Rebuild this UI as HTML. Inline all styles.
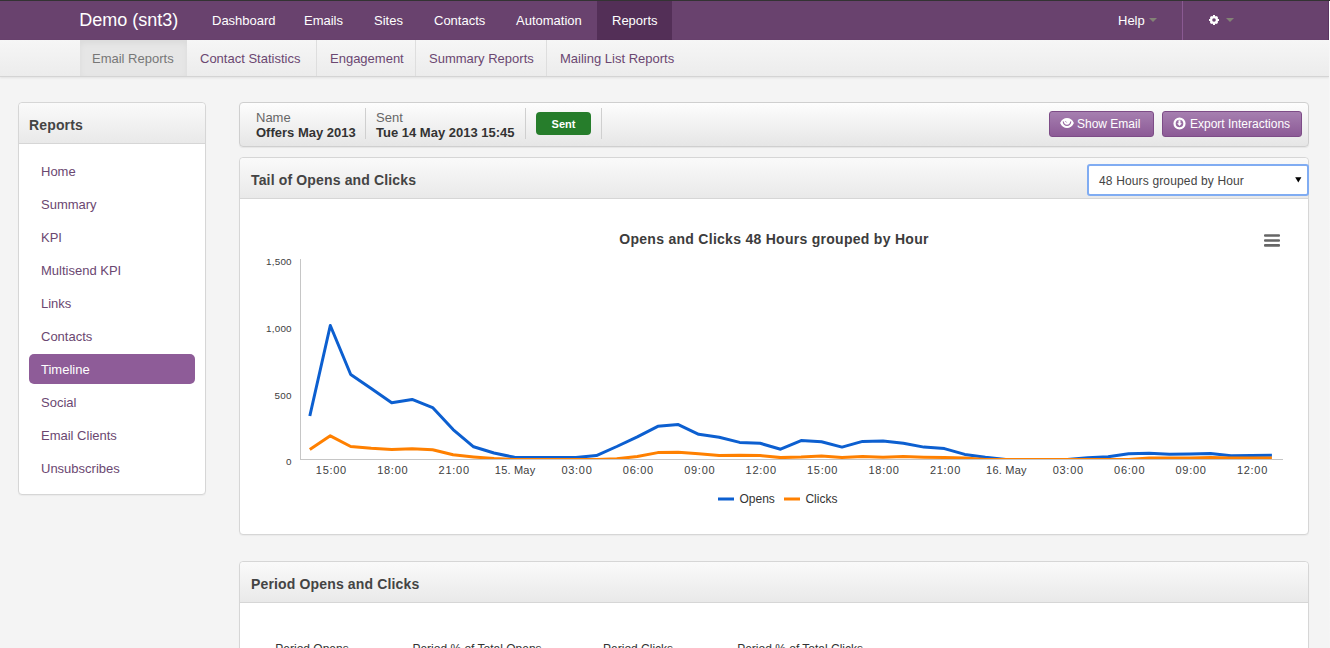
<!DOCTYPE html>
<html><head><meta charset="utf-8">
<style>
*{box-sizing:border-box;margin:0;padding:0}
html,body{width:1330px;height:648px;overflow:hidden}
body{background:#f4f4f4;font-family:"Liberation Sans",sans-serif;position:relative;color:#333}
.abs{position:absolute;white-space:nowrap}
#topline{position:absolute;left:0;top:0;width:1330px;height:1px;background:#333}
#nav{position:absolute;left:0;top:1px;width:1329px;height:39px;background:#69426e;border-right:1px solid #5a3560}
#nav .it{position:absolute;top:0;height:39px;color:#fff;font-size:13px;line-height:39px}
#nav .brand{font-size:18px}
#nav .active{background:#532f57}
.caret{position:absolute;width:0;height:0;border-left:4px solid transparent;border-right:4px solid transparent;border-top:4px solid #838376}
#sub{position:absolute;left:0;top:40px;width:1329px;height:37px;background:linear-gradient(#f6f6f6,#ececec);border-bottom:1px solid #d4d4d4;box-shadow:0 1px 2px rgba(0,0,0,.08)}
#sub .it{position:absolute;top:0;height:36px;line-height:37px;font-size:13px;color:#6b4771}
#sub .act{background:#e6e6e6;color:#777;box-shadow:inset 0 3px 6px rgba(0,0,0,.05)}
#sub .sep{position:absolute;top:0;width:1px;height:36px;background:#dedede}
#rcol{position:absolute;left:1329px;top:1px;width:1px;height:647px;background:linear-gradient(#fff 0,#fff 39px,#f7f7f7 39px,#f5f5f5 100%)}
.panel{position:absolute;background:#fff;border:1px solid #d6d6d6;border-radius:4px;box-shadow:0 1px 1px rgba(0,0,0,.04)}
.phead{position:absolute;left:0;top:0;right:0;background:linear-gradient(#fafafa,#e9e9e9);border-bottom:1px solid #d6d6d6;border-radius:4px 4px 0 0}
.ptitle{position:absolute;font-weight:bold;font-size:14px;color:#444;white-space:nowrap;letter-spacing:0.15px}
.slink{position:absolute;left:10px;width:166px;height:30px;line-height:32px;padding-left:12px;font-size:13px;color:#6b4771;border-radius:5px;white-space:nowrap}
.slink.on{background:#8e5c98;color:#fff}
#info{position:absolute;left:239px;top:102px;width:1070px;height:45px;border:1px solid #cfcfcf;border-radius:4px;background:linear-gradient(#fdfdfd,#e6e6e6);box-shadow:0 1px 1px rgba(0,0,0,.06)}
.lbl{position:absolute;font-size:13px;color:#666;white-space:nowrap}
.val{position:absolute;font-size:13px;font-weight:bold;color:#333;white-space:nowrap}
.vsep{position:absolute;top:5px;width:1px;height:31px;background:#cfcfcf}
.btn{position:absolute;height:26px;border:1px solid #7d4c87;border-radius:3px;background:linear-gradient(#a67fb0,#8c5a96);color:#fff;font-size:12px;line-height:24px;white-space:nowrap}
</style></head><body>
<div id="topline"></div>
<div id="nav">
  <div class="it brand" style="left:79.2px">Demo (snt3)</div>
  <div class="it" style="left:212px">Dashboard</div>
  <div class="it" style="left:304px">Emails</div>
  <div class="it" style="left:374px">Sites</div>
  <div class="it" style="left:434px">Contacts</div>
  <div class="it" style="left:516px">Automation</div>
  <div class="it active" style="left:597px;width:75px;padding-left:15px">Reports</div>
  <div class="it" style="left:1118px">Help</div>
  <div class="caret" style="left:1149px;top:17px"></div>
  <div style="position:absolute;left:1182px;top:0;width:1px;height:39px;background:#8a5a92"></div>
  <svg class="abs" style="left:1208px;top:13px" width="12" height="12" viewBox="0 0 12 12"><g fill="#fff"><circle cx="6" cy="6" r="4.1"/><rect x="5" y="1" width="2" height="10"/><rect x="1" y="5" width="10" height="2"/><rect x="5" y="1.2" width="2" height="9.6" transform="rotate(45 6 6)"/><rect x="5" y="1.2" width="2" height="9.6" transform="rotate(-45 6 6)"/></g><circle cx="6" cy="6" r="1.8" fill="#69426e"/></svg>
  <div class="caret" style="left:1226px;top:17px"></div>
</div>
<div id="sub">
  <div class="it act" style="left:80px;width:107px;padding-left:12px">Email Reports</div>
  <div class="it" style="left:200px">Contact Statistics</div>
  <div class="sep" style="left:316px"></div>
  <div class="it" style="left:330px">Engagement</div>
  <div class="sep" style="left:415px"></div>
  <div class="it" style="left:429px">Summary Reports</div>
  <div class="sep" style="left:546px"></div>
  <div class="it" style="left:560px">Mailing List Reports</div>
</div>
<div id="rcol"></div>

<!-- sidebar -->
<div class="panel" style="left:18px;top:102px;width:188px;height:393px">
  <div class="phead" style="height:41px"></div>
  <div class="ptitle" style="left:10px;top:14px">Reports</div>
  <div class="slink" style="top:53px">Home</div>
  <div class="slink" style="top:86px">Summary</div>
  <div class="slink" style="top:119px">KPI</div>
  <div class="slink" style="top:152px">Multisend KPI</div>
  <div class="slink" style="top:185px">Links</div>
  <div class="slink" style="top:218px">Contacts</div>
  <div class="slink on" style="top:251px">Timeline</div>
  <div class="slink" style="top:284px">Social</div>
  <div class="slink" style="top:317px">Email Clients</div>
  <div class="slink" style="top:350px">Unsubscribes</div>
</div>

<!-- info bar -->
<div id="info">
  <div class="lbl" style="left:16px;top:7px">Name</div>
  <div class="val" style="left:16px;top:22px">Offers May 2013</div>
  <div class="vsep" style="left:125px"></div>
  <div class="lbl" style="left:136px;top:7px">Sent</div>
  <div class="val" style="left:136px;top:22px">Tue 14 May 2013 15:45</div>
  <div class="vsep" style="left:285px"></div>
  <div style="position:absolute;left:296px;top:9px;width:55px;height:23px;background:#267d2b;border-radius:4px;color:#fff;font-weight:bold;font-size:11px;line-height:24.6px;text-align:center">Sent</div>
  <div class="vsep" style="left:361px"></div>
  <div class="btn" style="left:809px;top:8px;width:105px;padding-left:27px">Show Email</div>
  <svg class="abs" style="left:820px;top:14px" width="14" height="12" viewBox="0 0 14 12"><path d="M0.1 6 C2.9 -0.6 11.1 -0.6 13.9 6 C11.1 12.6 2.9 12.6 0.1 6 Z" fill="#fff"/><path d="M3.3 4.6 A3.7 3.7 0 0 0 10.7 4.6" fill="none" stroke="#9a6ca4" stroke-width="1.2"/><path d="M5.5 4.3 L6.5 5.4" stroke="#9a6ca4" stroke-width="1"/></svg>
  <div class="btn" style="left:922px;top:8px;width:140px;padding-left:27px">Export Interactions</div>
  <svg class="abs" style="left:933.4px;top:13.6px" width="13" height="13" viewBox="0 0 13 13"><circle cx="6.5" cy="6.5" r="4.95" fill="none" stroke="#fff" stroke-width="2.3"/><rect x="5.5" y="3.3" width="2" height="3.6" fill="#fff"/><path d="M4.1 6.2 L8.9 6.2 L6.5 9 Z" fill="#fff"/></svg>
</div>

<!-- tail panel -->
<div class="panel" style="left:239px;top:157px;width:1070px;height:378px">
  <div class="phead" style="height:41px"></div>
  <div class="ptitle" style="left:11px;top:14px">Tail of Opens and Clicks</div>
  <div style="position:absolute;left:847px;top:6px;width:222px;height:32px;border:2px solid #80acf2;border-radius:3px;background:#fff;font-size:12px;color:#444;line-height:30px;padding-left:10px;letter-spacing:0.15px;white-space:nowrap">48 Hours grouped by Hour</div>
  <svg class="abs" style="left:1055px;top:19px" width="7" height="6" viewBox="0 0 7 6"><path d="M0.2 0.2 L6.4 0.2 L3.3 5.6 Z" fill="#000"/></svg>
</div>

<!-- period panel -->
<div class="panel" style="left:239px;top:561px;width:1070px;height:120px">
  <div class="phead" style="height:41px"></div>
  <div class="ptitle" style="left:11px;top:14px">Period Opens and Clicks</div>
  <div class="lbl" style="left:35.3px;top:79.5px;color:#333;font-size:12px">Period Opens</div>
  <div class="lbl" style="left:172.4px;top:79.5px;color:#333;font-size:12px">Period % of Total Opens</div>
  <div class="lbl" style="left:363.1px;top:79.5px;color:#333;font-size:12px">Period Clicks</div>
  <div class="lbl" style="left:497.2px;top:79.5px;color:#333;font-size:12px">Period % of Total Clicks</div>
</div>
<svg id="chart" style="position:absolute;left:0;top:0" width="1330" height="648" viewBox="0 0 1330 648">
<defs><clipPath id="pc"><rect x="300" y="250" width="984" height="209"/></clipPath></defs>
<text x="774" y="244.4" text-anchor="middle" font-family="Liberation Sans" font-weight="bold" font-size="14" fill="#3c3c3c" letter-spacing="0.28">Opens and Clicks 48 Hours grouped by Hour</text>
<text x="291.6" y="265" text-anchor="end" font-family="Liberation Sans" font-size="9.9" fill="#404040" textLength="25.6" lengthAdjust="spacing">1,500</text>
<text x="291.6" y="331.7" text-anchor="end" font-family="Liberation Sans" font-size="9.9" fill="#404040" textLength="25.6" lengthAdjust="spacing">1,000</text>
<text x="291.6" y="398.6" text-anchor="end" font-family="Liberation Sans" font-size="9.9" fill="#404040" textLength="17" lengthAdjust="spacing">500</text>
<text x="291.6" y="465.2" text-anchor="end" font-family="Liberation Sans" font-size="9.9" fill="#404040">0</text>
<text x="315.8" y="473.8" font-family="Liberation Sans" font-size="11" fill="#404040" textLength="30.4" lengthAdjust="spacing">15:00</text>
<text x="377.2" y="473.8" font-family="Liberation Sans" font-size="11" fill="#404040" textLength="30.4" lengthAdjust="spacing">18:00</text>
<text x="438.6" y="473.8" font-family="Liberation Sans" font-size="11" fill="#404040" textLength="30.4" lengthAdjust="spacing">21:00</text>
<text x="494.8" y="473.8" font-family="Liberation Sans" font-size="11" fill="#404040" textLength="40.4" lengthAdjust="spacing">15. May</text>
<text x="561.4" y="473.8" font-family="Liberation Sans" font-size="11" fill="#404040" textLength="30.4" lengthAdjust="spacing">03:00</text>
<text x="622.8" y="473.8" font-family="Liberation Sans" font-size="11" fill="#404040" textLength="30.4" lengthAdjust="spacing">06:00</text>
<text x="684.2" y="473.8" font-family="Liberation Sans" font-size="11" fill="#404040" textLength="30.4" lengthAdjust="spacing">09:00</text>
<text x="745.6" y="473.8" font-family="Liberation Sans" font-size="11" fill="#404040" textLength="30.4" lengthAdjust="spacing">12:00</text>
<text x="807.0" y="473.8" font-family="Liberation Sans" font-size="11" fill="#404040" textLength="30.4" lengthAdjust="spacing">15:00</text>
<text x="868.5" y="473.8" font-family="Liberation Sans" font-size="11" fill="#404040" textLength="30.4" lengthAdjust="spacing">18:00</text>
<text x="929.9" y="473.8" font-family="Liberation Sans" font-size="11" fill="#404040" textLength="30.4" lengthAdjust="spacing">21:00</text>
<text x="986.1" y="473.8" font-family="Liberation Sans" font-size="11" fill="#404040" textLength="40.4" lengthAdjust="spacing">16. May</text>
<text x="1052.7" y="473.8" font-family="Liberation Sans" font-size="11" fill="#404040" textLength="30.4" lengthAdjust="spacing">03:00</text>
<text x="1114.1" y="473.8" font-family="Liberation Sans" font-size="11" fill="#404040" textLength="30.4" lengthAdjust="spacing">06:00</text>
<text x="1175.5" y="473.8" font-family="Liberation Sans" font-size="11" fill="#404040" textLength="30.4" lengthAdjust="spacing">09:00</text>
<text x="1236.9" y="473.8" font-family="Liberation Sans" font-size="11" fill="#404040" textLength="30.4" lengthAdjust="spacing">12:00</text>
<g clip-path="url(#pc)" fill="none" stroke-width="3" stroke-linejoin="round" stroke-linecap="butt">
<path d="M309.8 416.0 L330.3 325.5 L350.7 374.5 L371.2 388.6 L391.7 402.8 L412.1 399.4 L432.6 407.6 L453.1 429.6 L473.6 446.8 L494.0 453.0 L514.5 457.3 L535.0 457.5 L555.4 457.5 L575.9 457.4 L596.4 455.6 L616.8 446.5 L637.3 436.8 L657.8 426.3 L678.3 424.6 L698.7 434.3 L719.2 437.3 L739.7 442.4 L760.1 443.3 L780.6 449.2 L801.1 440.6 L821.5 441.7 L842.0 447.1 L862.5 441.4 L883.0 441.0 L903.4 443.3 L923.9 447.1 L944.4 448.6 L964.8 454.4 L985.3 457.3 L1005.8 459.5 L1026.2 459.5 L1046.7 459.5 L1067.2 459.5 L1087.7 457.8 L1108.1 456.8 L1128.6 453.8 L1149.1 453.3 L1169.5 454.2 L1190.0 454.0 L1210.5 453.5 L1231.0 455.8 L1251.4 455.4 L1271.9 455.2" stroke="#0c5fd0"/>
<path d="M309.8 449.4 L330.3 435.8 L350.7 446.5 L371.2 448.3 L391.7 449.4 L412.1 448.8 L432.6 449.8 L453.1 454.8 L473.6 456.9 L494.0 458.6 L514.5 459.5 L535.0 459.5 L555.4 459.5 L575.9 459.5 L596.4 459.5 L616.8 458.8 L637.3 456.5 L657.8 452.6 L678.3 452.2 L698.7 453.7 L719.2 455.6 L739.7 455.3 L760.1 455.6 L780.6 457.6 L801.1 457.1 L821.5 456.0 L842.0 457.4 L862.5 456.6 L883.0 457.3 L903.4 456.6 L923.9 457.2 L944.4 457.5 L964.8 458.0 L985.3 459.5 L1005.8 459.5 L1026.2 459.5 L1046.7 459.5 L1067.2 459.5 L1087.7 459.5 L1108.1 459.5 L1128.6 459.5 L1149.1 458.1 L1169.5 458.1 L1190.0 457.9 L1210.5 457.6 L1231.0 458.1 L1251.4 458.1 L1271.9 458.1" stroke="#ff8000"/>
</g>
<rect x="300" y="259" width="1" height="201" fill="#c6c6c6"/>
<rect x="300" y="459" width="983" height="1" fill="#c6c6c6"/>
<rect x="718" y="497.5" width="16" height="3" fill="#0c5fd0"/>
<text x="739.5" y="503" font-family="Liberation Sans" font-size="12" fill="#333">Opens</text>
<rect x="784" y="497.5" width="16" height="3" fill="#ff8000"/>
<text x="805.4" y="503" font-family="Liberation Sans" font-size="12" fill="#333">Clicks</text>
<rect x="1264" y="234.2" width="16" height="2.6" rx="1" fill="#666"/>
<rect x="1264" y="239.2" width="16" height="2.6" rx="1" fill="#666"/>
<rect x="1264" y="244.1" width="16" height="2.6" rx="1" fill="#666"/>
</svg>
</body></html>
